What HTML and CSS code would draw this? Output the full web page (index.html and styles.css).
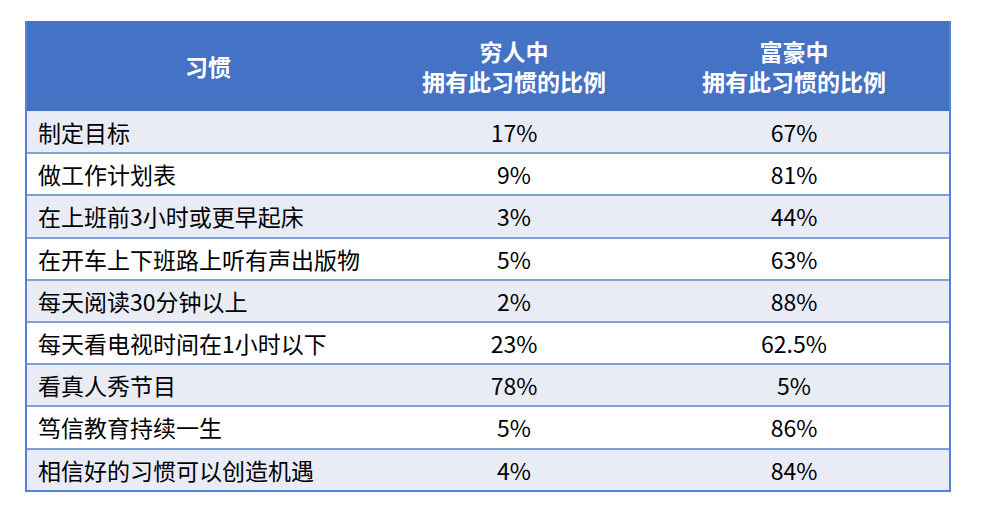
FILE: index.html
```html
<!DOCTYPE html>
<html lang="zh-CN">
<head>
<meta charset="utf-8">
<title>习惯</title>
<link rel="stylesheet" href="styles.css">
</head>
<body>
<div class="page">
  <table class="habits">
    <colgroup>
      <col class="c1">
      <col class="c2">
      <col class="c3">
    </colgroup>
    <thead>
      <tr>
        <th>习惯</th>
        <th><span class="hl">穷人中</span><span class="hl">拥有此习惯的比例</span></th>
        <th><span class="hl">富豪中</span><span class="hl">拥有此习惯的比例</span></th>
      </tr>
    </thead>
    <tbody>
      <tr class="alt"><td>制定目标</td><td>17%</td><td>67%</td></tr>
      <tr><td>做工作计划表</td><td>9%</td><td>81%</td></tr>
      <tr class="alt"><td>在上班前3小时或更早起床</td><td>3%</td><td>44%</td></tr>
      <tr><td>在开车上下班路上听有声出版物</td><td>5%</td><td>63%</td></tr>
      <tr class="alt"><td>每天阅读30分钟以上</td><td>2%</td><td>88%</td></tr>
      <tr><td>每天看电视时间在1小时以下</td><td>23%</td><td>62.5%</td></tr>
      <tr class="alt"><td>看真人秀节目</td><td>78%</td><td>5%</td></tr>
      <tr><td>笃信教育持续一生</td><td>5%</td><td>86%</td></tr>
      <tr class="alt"><td>相信好的习惯可以创造机遇</td><td>4%</td><td>84%</td></tr>
    </tbody>
  </table>
</div>
</body>
</html>
```

FILE: styles.css
```css
html, body {
  margin: 0;
  padding: 0;
  background: #ffffff;
}

.page {
  padding: 21px 0 0 25px;
  font-family: "Microsoft YaHei", "Noto Sans CJK SC", "Noto Sans", sans-serif;
}

.habits {
  border-collapse: separate;
  border-spacing: 0;
  width: 926px;
  table-layout: fixed;
  border-left: 2px solid #5283d6;
  border-right: 2px solid #5283d6;
}

.c1 { width: 362px; }
.c2 { width: 250px; }
.c3 { width: 310px; }

.habits th {
  background: #4472c4;
  color: #ffffff;
  font-weight: bold;
  font-size: 23px;
  line-height: 30px;
  height: 90px;
  padding: 0;
  text-align: center;
  vertical-align: middle;
  border-bottom: 1px solid #dfe6f4;
}

.hl {
  display: block;
}

.habits td {
  font-size: 23px;
  line-height: 28px;
  height: 40.2px;
  padding: 0;
  color: #000000;
  text-align: center;
  vertical-align: middle;
  border-bottom: 2px solid #7fa0dc;
  background: #ffffff;
}

.habits tbody tr:last-child td {
  border-bottom: 2px solid #5283d6;
}

.habits td:first-child {
  text-align: left;
  padding-left: 11px;
}

.habits tr.alt td {
  background: #e9ebf5;
}
```
